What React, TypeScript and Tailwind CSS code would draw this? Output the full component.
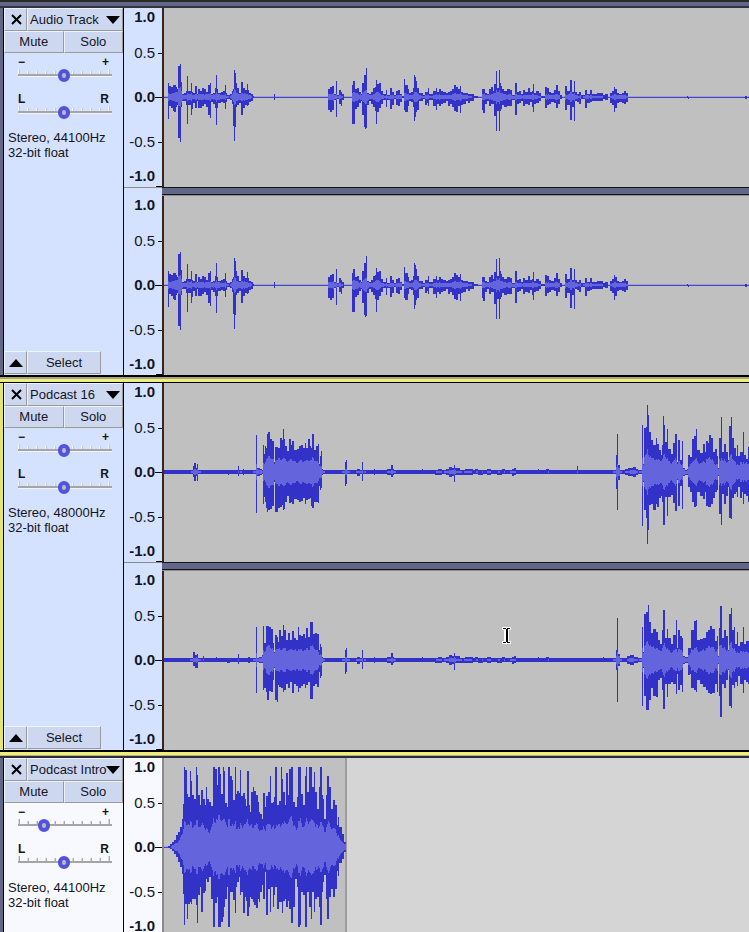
import { useState } from 'react';

// [x, peak above the zero line, peak below it], each held until the next entry
type Sample = [number, number, number];

type Channel = {
  samples: Sample[];
  rms: number;
};

type Track = {
  id: string;
  name: string;
  format: string;
  gain: number;
  pan: number;
  focused?: boolean;
  muted?: boolean;
  clipEnd?: number;
  channels: Channel[];
};

const START = 164;
const MIDDLE = 89;

const speech: Sample[] = [
  [164, 0, 0], [168, 14, 22], [169, 11, 9], [171, 10, 11], [173, 12, 14], [174, 12, 15], [176, 10, 10], [177, 8, 8],
  [178, 31, 41], [180, 33, 45], [181, 15, 10], [182, 3, 4], [184, 4, 4], [186, 6, 8], [187, 21, 27], [188, 6, 8],
  [191, 14, 18], [192, 5, 12], [193, 4, 6], [195, 11, 11], [197, 3, 4], [198, 8, 11], [200, 6, 11], [202, 9, 9],
  [204, 8, 7], [206, 5, 10], [208, 12, 18], [210, 14, 21], [211, 3, 5], [213, 4, 7], [215, 9, 11], [216, 22, 28],
  [217, 8, 11], [218, 4, 6], [221, 5, 5], [223, 6, 6], [225, 12, 12], [226, 4, 5], [227, 2, 2], [230, 3, 3],
  [232, 6, 7], [233, 8, 29], [234, 27, 44], [235, 24, 30], [236, 14, 10], [237, 9, 8], [239, 4, 6], [241, 15, 18],
  [243, 9, 11], [245, 7, 8], [247, 13, 9], [248, 7, 8], [249, 4, 5], [251, 3, 4], [253, 1, 1], [254, 0, 0],
  [274, 3, 3], [275, 0, 0], [328, 8, 13], [330, 10, 15], [332, 11, 13], [334, 3, 3], [336, 16, 20], [337, 2, 2],
  [339, 7, 7], [341, 5, 9], [342, 3, 3], [344, 0, 0], [352, 12, 27], [353, 16, 27], [355, 8, 12], [357, 9, 10],
  [359, 5, 6], [361, 3, 4], [362, 14, 18], [364, 22, 30], [365, 22, 32], [366, 29, 31], [367, 4, 8], [369, 3, 4],
  [371, 5, 7], [373, 9, 10], [375, 10, 14], [376, 17, 27], [377, 13, 15], [379, 14, 11], [381, 6, 7], [383, 3, 3],
  [386, 7, 10], [387, 2, 3], [390, 9, 12], [392, 5, 8], [394, 2, 2], [396, 6, 8], [398, 7, 9], [400, 3, 5],
  [402, 1, 1], [404, 18, 13], [405, 12, 15], [408, 8, 9], [409, 4, 4], [411, 5, 5], [413, 9, 10], [414, 22, 24],
  [415, 20, 20], [416, 16, 15], [417, 9, 13], [419, 4, 4], [423, 2, 2], [425, 5, 8], [427, 5, 6], [428, 9, 9],
  [429, 3, 3], [433, 6, 9], [436, 9, 13], [437, 5, 7], [439, 8, 9], [441, 6, 7], [443, 5, 6], [446, 4, 4],
  [448, 5, 9], [450, 6, 7], [452, 8, 10], [454, 12, 14], [456, 10, 15], [458, 8, 9], [460, 11, 16], [461, 5, 8],
  [463, 4, 7], [466, 4, 4], [468, 3, 6], [470, 3, 4], [474, 1, 1], [478, 0, 0], [482, 8, 13], [483, 8, 16],
  [485, 4, 7], [487, 3, 4], [489, 8, 9], [491, 10, 7], [493, 6, 7], [494, 13, 19], [496, 26, 34], [497, 9, 14],
  [499, 27, 34], [500, 14, 14], [501, 11, 12], [502, 8, 8], [504, 6, 10], [507, 8, 9], [510, 7, 9], [512, 2, 3],
  [515, 14, 18], [517, 5, 7], [519, 6, 6], [521, 3, 4], [523, 7, 9], [525, 5, 7], [528, 9, 8], [530, 5, 5],
  [532, 6, 10], [533, 13, 15], [534, 4, 7], [536, 6, 6], [539, 4, 4], [541, 1, 1], [545, 10, 11], [547, 9, 8],
  [549, 5, 7], [551, 4, 5], [554, 7, 6], [556, 12, 11], [558, 6, 7], [560, 2, 2], [562, 0, 0], [565, 11, 13],
  [567, 6, 8], [570, 17, 23], [572, 5, 10], [574, 16, 24], [575, 5, 4], [577, 3, 5], [579, 5, 7], [581, 2, 2],
  [585, 7, 11], [587, 3, 6], [590, 7, 5], [592, 3, 4], [597, 4, 4], [603, 2, 2], [605, 3, 3], [608, 0, 0],
  [610, 4, 6], [612, 6, 8], [614, 10, 15], [615, 8, 11], [617, 4, 6], [619, 3, 5], [622, 4, 6], [624, 6, 7],
  [626, 4, 5], [628, 0, 0], [687, 1, 1], [688, 0, 2], [689, 0, 0], [745, 1, 2], [747, 0, 0],
];

// the pauses between the spoken parts, the same on both channels
const pauses: Sample[] = [
  [345, 10, 14], [346, 12, 12], [347, 2, 2], [357, 3, 4], [360, 2, 2], [362, 10, 9], [363, 2, 2], [374, 3, 3],
  [375, 2, 2], [387, 3, 3], [391, 7, 5], [393, 3, 3], [394, 2, 2], [422, 3, 2], [423, 2, 2], [435, 2, 3],
  [438, 3, 3], [442, 2, 2], [446, 3, 3], [449, 5, 5], [452, 4, 4], [454, 7, 10], [455, 4, 3], [460, 2, 3],
  [465, 3, 3], [473, 2, 2], [475, 3, 2], [478, 2, 3], [483, 2, 2], [487, 3, 3], [491, 2, 2], [497, 2, 3],
  [502, 3, 2], [505, 2, 2], [512, 3, 4], [514, 4, 3], [516, 2, 2], [538, 3, 2], [539, 2, 2], [546, 3, 2],
  [549, 2, 2],
];

const podcastLeft: Sample[] = [
  [164, 2, 2], [193, 6, 5], [194, 9, 9], [196, 4, 4], [197, 8, 9], [198, 2, 2], [228, 2, 3], [229, 2, 2],
  [238, 6, 4], [239, 2, 2], [243, 3, 3], [244, 2, 2], [256, 37, 41], [257, 4, 4], [260, 3, 3], [262, 2, 2],
  [263, 27, 32], [264, 18, 25], [265, 26, 30], [266, 24, 36], [267, 38, 40], [268, 40, 38], [270, 33, 37],
  [272, 31, 34], [274, 10, 10], [275, 25, 40], [278, 24, 36], [280, 34, 35], [282, 32, 33], [283, 43, 38],
  [284, 33, 37], [285, 26, 30], [287, 21, 24], [289, 33, 31], [291, 27, 30], [292, 31, 32], [294, 22, 27],
  [297, 23, 28], [299, 26, 30], [301, 27, 29], [303, 24, 26], [305, 29, 32], [306, 24, 28], [308, 33, 27],
  [310, 26, 26], [311, 24, 34], [312, 38, 36], [314, 22, 30], [316, 26, 30], [318, 28, 31], [319, 8, 14],
  [320, 16, 18], [321, 21, 16], [322, 3, 3], [323, 2, 2],
  ...pauses,
  [577, 6, 2], [578, 2, 2], [616, 17, 17], [617, 38, 38], [618, 7, 8], [620, 2, 2], [625, 3, 3], [628, 4, 4],
  [633, 5, 5], [636, 3, 3], [638, 2, 2], [642, 47, 54], [643, 8, 10], [644, 44, 38], [646, 45, 46], [647, 67, 72],
  [648, 57, 58], [649, 40, 33], [651, 32, 32], [653, 27, 38], [656, 34, 32], [657, 28, 35], [659, 22, 26],
  [661, 17, 24], [662, 27, 30], [663, 56, 53], [664, 47, 53], [665, 30, 25], [667, 43, 44], [668, 23, 25],
  [671, 18, 23], [673, 29, 31], [675, 38, 39], [677, 10, 8], [678, 32, 34], [680, 12, 14], [682, 31, 37],
  [683, 4, 4], [685, 2, 3], [687, 3, 3], [688, 17, 15], [690, 15, 20], [692, 33, 30], [694, 36, 35], [696, 43, 34],
  [697, 22, 20], [700, 19, 24], [703, 28, 27], [705, 20, 20], [706, 31, 34], [708, 29, 35], [709, 37, 35],
  [711, 34, 32], [713, 20, 26], [715, 23, 20], [717, 16, 18], [718, 4, 4], [719, 34, 42], [721, 55, 53],
  [722, 20, 22], [724, 28, 32], [726, 20, 24], [728, 12, 15], [729, 46, 46], [731, 55, 47], [732, 34, 26],
  [734, 24, 22], [736, 16, 20], [737, 27, 25], [738, 16, 15], [740, 20, 26], [742, 20, 20], [743, 40, 32],
  [744, 17, 22], [746, 13, 24], [748, 25, 30], [750, 2, 2],
];

const podcastRight: Sample[] = [
  [164, 2, 2], [193, 8, 6], [195, 5, 8], [197, 6, 8], [198, 2, 2], [203, 4, 2], [204, 2, 2], [216, 3, 2],
  [217, 2, 2], [227, 2, 3], [230, 2, 2], [238, 6, 4], [239, 2, 2], [248, 3, 3], [250, 2, 2], [256, 33, 33],
  [257, 2, 2], [259, 3, 3], [262, 5, 3], [263, 34, 30], [264, 17, 28], [266, 34, 32], [267, 34, 40], [269, 33, 31],
  [271, 31, 32], [273, 17, 20], [274, 8, 8], [275, 25, 40], [277, 23, 42], [278, 18, 25], [279, 30, 27],
  [281, 24, 28], [283, 35, 32], [284, 30, 30], [286, 20, 24], [288, 27, 28], [290, 20, 22], [292, 29, 33],
  [294, 22, 24], [296, 20, 26], [298, 33, 32], [299, 25, 28], [301, 24, 26], [303, 26, 24], [305, 22, 28],
  [306, 32, 25], [308, 23, 22], [310, 38, 39], [313, 26, 26], [315, 27, 24], [317, 26, 27], [319, 10, 12],
  [320, 16, 18], [321, 13, 16], [322, 3, 3], [323, 2, 2],
  ...pauses,
  [603, 3, 2], [604, 2, 2], [616, 10, 10], [617, 42, 42], [618, 6, 6], [620, 2, 2], [627, 4, 4], [630, 5, 5],
  [634, 3, 3], [638, 2, 2], [642, 33, 46], [643, 8, 8], [644, 46, 36], [646, 48, 50], [648, 55, 50], [649, 38, 40],
  [651, 27, 28], [653, 31, 36], [656, 28, 37], [658, 20, 20], [660, 16, 18], [662, 30, 30], [663, 50, 49],
  [665, 22, 24], [667, 31, 37], [668, 22, 24], [671, 16, 22], [673, 25, 24], [676, 40, 34], [677, 12, 14],
  [678, 30, 30], [680, 24, 25], [682, 22, 32], [683, 4, 4], [685, 3, 3], [688, 12, 15], [690, 12, 14], [691, 30, 28],
  [694, 39, 30], [696, 40, 32], [697, 20, 20], [700, 21, 24], [703, 22, 27], [706, 28, 30], [708, 30, 33],
  [710, 34, 34], [712, 31, 33], [715, 19, 24], [717, 24, 32], [718, 4, 4], [719, 32, 36], [720, 54, 57],
  [722, 22, 24], [724, 30, 28], [726, 24, 20], [728, 10, 10], [729, 46, 46], [731, 52, 48], [732, 30, 25],
  [734, 33, 28], [735, 16, 22], [737, 28, 26], [738, 14, 16], [740, 18, 24], [743, 33, 33], [744, 16, 20],
  [746, 19, 22], [748, 19, 24], [750, 2, 2],
];

const intro: Sample[] = [
  [164, 0, 0], [168, 1, 1], [170, 3, 2], [172, 5, 4], [174, 7, 7], [176, 12, 10], [178, 15, 15], [180, 20, 20],
  [182, 28, 27], [183, 43, 47], [184, 80, 78], [185, 77, 57], [187, 53, 72], [188, 50, 57], [190, 76, 55],
  [191, 66, 57], [192, 52, 52], [194, 48, 52], [196, 80, 58], [197, 72, 76], [198, 52, 48], [200, 42, 40],
  [201, 57, 65], [203, 48, 46], [205, 42, 44], [206, 60, 32], [207, 48, 35], [209, 45, 30], [211, 41, 52],
  [213, 80, 80], [215, 78, 56], [217, 62, 50], [218, 80, 80], [220, 73, 80], [221, 53, 75], [223, 80, 70],
  [224, 76, 60], [225, 44, 52], [227, 40, 40], [228, 80, 80], [230, 71, 45], [232, 67, 45], [233, 47, 53],
  [235, 80, 66], [236, 53, 40], [237, 56, 35], [239, 54, 30], [240, 77, 48], [241, 51, 45], [243, 54, 66],
  [245, 48, 50], [246, 41, 54], [247, 76, 69], [249, 42, 60], [250, 35, 50], [251, 55, 52], [253, 60, 55],
  [254, 56, 58], [256, 52, 61], [258, 45, 52], [259, 35, 55], [260, 33, 45], [262, 28, 38], [263, 54, 52],
  [265, 40, 25], [266, 51, 68], [268, 55, 42], [270, 71, 65], [271, 44, 40], [273, 45, 60], [274, 50, 48],
  [275, 80, 40], [277, 42, 62], [279, 46, 55], [281, 80, 55], [282, 68, 66], [283, 55, 54], [285, 42, 52],
  [286, 74, 60], [288, 52, 54], [289, 78, 62], [291, 80, 76], [293, 45, 60], [295, 40, 32], [297, 50, 40],
  [298, 80, 80], [300, 80, 78], [301, 53, 45], [303, 42, 48], [305, 71, 80], [306, 80, 80], [307, 55, 45],
  [309, 80, 60], [311, 80, 72], [312, 60, 45], [314, 75, 65], [315, 55, 52], [317, 38, 50], [319, 60, 60],
  [320, 80, 78], [322, 52, 45], [323, 48, 35], [324, 28, 28], [326, 52, 52], [327, 71, 72], [329, 60, 50],
  [331, 38, 42], [333, 47, 50], [335, 42, 42], [337, 22, 24], [338, 30, 29], [339, 20, 16], [342, 13, 12],
  [344, 5, 5], [346, 0, 0],
];

const initialTracks: Track[] = [
  {
    id: 'audio',
    name: 'Audio Track',
    format: 'Stereo, 44100Hz',
    gain: 50,
    pan: 50,
    channels: [{ samples: speech, rms: 0.32 }, { samples: speech, rms: 0.32 }],
  },
  {
    id: 'podcast',
    name: 'Podcast 16',
    format: 'Stereo, 48000Hz',
    gain: 50,
    pan: 50,
    focused: true,
    channels: [{ samples: podcastLeft, rms: 0.4 }, { samples: podcastRight, rms: 0.4 }],
  },
  {
    id: 'intro',
    name: 'Podcast Intro',
    format: 'Stereo, 44100Hz',
    gain: 28,
    pan: 50,
    muted: true,
    clipEnd: 346,
    channels: [{ samples: intro, rms: 0.4 }, { samples: intro, rms: 0.4 }],
  },
];

// one entry per pixel column
function toColumns(samples: Sample[]) {
  const columns: [number, number][] = [];
  samples.forEach(([x, up, down], i) => {
    const next = samples[i + 1] ? samples[i + 1][0] : x + 1;
    for (let c = x; c < next; c++) columns.push([up, down]);
  });
  return columns;
}

function toRms(columns: [number, number][], ratio: number) {
  return columns.map(([up, down], i): [number, number] => {
    const near = columns.slice(Math.max(0, i - 3), i + 4);
    const mean = near.reduce((sum, [u, d]) => sum + (u + d) / 2, 0) / near.length;
    const ripple = 0.88 + 0.24 * ((((i >> 1) * 37) % 11) / 10);
    const level = (mean * 0.65 + ((up + down) / 2) * 0.35) * ratio * ripple;
    // too quiet to show inside the peaks
    if (level < 1) return [0, 0];
    return [Math.min(up - 1, level), Math.min(down - 1, level)];
  });
}

function toPath(columns: [number, number][]) {
  return columns
    .map(([up, down], x) => {
      const top = Math.round(up);
      const bottom = Math.round(down);
      return top + bottom < 2 ? '' : `M${x} ${MIDDLE - top}h1v${top + bottom}h-1z`;
    })
    .join('');
}

function Waveform({ channel, clipEnd, label }: { channel: Channel; clipEnd?: number; label: string }) {
  const columns = toColumns(channel.samples);
  const end = clipEnd ? clipEnd - START : undefined;
  return (
    <svg role="img" aria-label={label} className="block h-[179px] w-full" shapeRendering="crispEdges">
      {end && <rect x={end} y="0" width="100%" height="179" fill="#d5d5d5" />}
      {end && <rect x={end - 1} y="0" width="2" height="179" fill="#9c9c9c" />}
      <rect x="0" y={MIDDLE - 1} width={end || '100%'} height="2" fill="#a0a0cc" />
      <rect x="0" y={MIDDLE} width={end || '100%'} height="1" fill="#4646cd" />
      <path d={toPath(columns)} fill="#3232c8" />
      <path d={toPath(toRms(columns, channel.rms))} fill="#6464dc" />
    </svg>
  );
}

function Ruler() {
  return (
    <div className="flex h-[179px] flex-col text-[15px] leading-[18px]">
      <div className="flex justify-end font-bold">1.0<span className="w-[7px]" /></div>
      <div className="mt-[18px] flex items-center justify-end">0.5<span className="ml-[3px] h-px w-1 bg-black" /></div>
      <div className="mt-[26px] flex items-center justify-end font-bold">0.0<span className="h-px w-[7px] bg-black" /></div>
      <div className="mt-[27px] flex items-center justify-end">-0.5<span className="ml-[3px] h-px w-1 bg-black" /></div>
      <div className="mt-[16px] flex justify-end font-bold">-1.0<span className="w-[7px]" /></div>
      <span className="mt-px h-px w-[6px] self-end bg-black" />
    </div>
  );
}

const bevel = 'border border-t-[#eef2fb] border-l-[#eef2fb] border-r-[#9a9a9a] border-b-[#9a9a9a] bg-[#cdd8f0]';

function Slider({ left, right, label, value, muted, onChange }: {
  left: string;
  right: string;
  label: string;
  value: number;
  muted?: boolean;
  onChange: (value: number) => void;
}) {
  return (
    <label className="block px-[9px]">
      <span className="flex justify-between px-[5px] text-xs leading-[13px] font-bold">
        <span>{left}</span>
        <span>{right}</span>
      </span>
      <span className="relative block h-3">
        <svg className="absolute inset-0 h-3 w-full" shapeRendering="crispEdges">
          {[0, 1, 2, 3, 4, 5, 6, 7, 8, 9, 10].map((i) => (
            <g key={i}>
              <rect x={5 + i * 9} y={i % 10 ? 2 : 0} width="2" height={i % 10 ? 4 : 6} fill={muted ? '#d8d8dc' : '#f4f4f4'} />
              <rect x={6 + i * 9} y={i % 10 ? 2 : 0} width="1" height={i % 10 ? 4 : 6} fill={muted ? '#a9a9a9' : '#c8c8c8'} />
            </g>
          ))}
          <rect x="5" y="5" width="94" height="2" fill="#a5a5a5" />
          {!muted && <rect x="5" y="7" width="94" height="1" fill="#f4f4f4" />}
        </svg>
        <input
          type="range"
          aria-label={label}
          min={0}
          max={100}
          value={value}
          onChange={(e) => onChange(Number(e.target.value))}
          className="absolute inset-y-0 left-0 h-3 w-[102px] appearance-none bg-transparent [&::-webkit-slider-thumb]:h-[13px] [&::-webkit-slider-thumb]:w-3 [&::-webkit-slider-thumb]:appearance-none [&::-webkit-slider-thumb]:rounded-full [&::-webkit-slider-thumb]:border-4 [&::-webkit-slider-thumb]:border-[#5252dc] [&::-webkit-slider-thumb]:bg-[#b9b9c4]"
        />
      </span>
    </label>
  );
}

function ControlPanel({ track, onChange, onClose }: { track: Track; onChange: (patch: Partial<Track>) => void; onClose: () => void }) {
  return (
    <div className={`flex w-[120px] shrink-0 flex-col border-r border-black pb-px text-[13px] ${track.muted ? 'bg-[#f8f9ff]' : 'bg-[#d5e2ff]'}`}>
      <div className="flex h-[23px]">
        <button aria-label="Close track" onClick={onClose} className={`flex w-[23px] items-center justify-center pl-[2px] ${bevel}`}>
          <svg width="11" height="11" viewBox="0 0 11 11" stroke="#000" strokeWidth="2">
            <path d="M1 1l9 9M10 1l-9 9" />
          </svg>
        </button>
        <button aria-label={track.name} className={`relative flex flex-1 items-center overflow-hidden pl-[2px] whitespace-nowrap ${bevel}`}>
          {track.name}
          <svg width="14" height="8" viewBox="0 0 14 8" className="absolute right-[2px]">
            <path d="M0 0h14l-7 8z" />
          </svg>
        </button>
      </div>
      <div className="grid h-[22px] grid-cols-2">
        <button className={bevel}>Mute</button>
        <button className={bevel}>Solo</button>
      </div>

      <div className="mt-[3px] flex flex-col gap-3">
        <Slider left="−" right="+" label="Gain" value={track.gain} muted={track.muted} onChange={(gain) => onChange({ gain })} />
        <Slider left="L" right="R" label="Pan" value={track.pan} muted={track.muted} onChange={(pan) => onChange({ pan })} />
      </div>

      <p className="mt-3 pl-1 leading-[15px]">
        {track.format}
        <br />
        32-bit float
      </p>

      <div className="mt-auto flex h-[23px]">
        <button aria-label="Collapse track" className={`flex w-[23px] items-center justify-center ${bevel}`}>
          <svg width="14" height="8" viewBox="0 0 14 8">
            <path d="M0 8h14l-7-8z" />
          </svg>
        </button>
        <button className={`w-[74px] ${bevel}`}>Select</button>
      </div>
    </div>
  );
}

function IBeam() {
  return (
    <svg width="11" height="19" viewBox="0 0 11 19" shapeRendering="crispEdges" className="absolute top-[55px] left-[337px]">
      <path d="M1 1h9v3H8v11h2v3H1v-3h2V4H1z" fill="#fff" />
      <path d="M2 2h3v1h1V2h3v1H7v13h2v1H6v-1H5v1H2v-1h3V3H2z" fill="#000" />
    </svg>
  );
}

function TrackRow({ track, onChange, onClose }: { track: Track; onChange: (patch: Partial<Track>) => void; onClose: () => void }) {
  return (
    <section aria-label={track.name} className={`border-l-[3px] ${track.focused ? 'border-[#e6e66e]' : 'border-[#636787]'}`}>
      <div className="flex border-l border-black">
        <ControlPanel track={track} onChange={onChange} onClose={onClose} />
        <div className={`flex w-[38px] shrink-0 flex-col ${track.muted ? 'bg-[#f8f9ff]' : 'bg-[#d5e2ff]'}`}>
          <Ruler />
          <div className="h-[9px] border-t border-[#8c8c8c]" />
          <Ruler />
        </div>
        <div className="min-w-0 flex-1">
          {track.channels.map((channel, i) => (
            <div key={i}>
              {i > 0 && (
                <div className="border-b border-[#8c8c8c]">
                  <div className="h-2 border-y border-[#14141e] bg-[#636787]" />
                </div>
              )}
              <div className={`relative border-l-2 bg-[#c0c0c0] ${track.muted ? 'border-[#8a8a8a]' : 'border-[#3a2420]'}`}>
                <Waveform channel={channel} clipEnd={track.clipEnd} label={`${track.name} channel ${i + 1}`} />
                {track.focused && i === 1 && <IBeam />}
              </div>
            </div>
          ))}
        </div>
      </div>
    </section>
  );
}

export default function App() {
  const [tracks, setTracks] = useState(initialTracks);

  function update(id: string, patch: Partial<Track>) {
    setTracks((prev) => prev.map((t) => (t.id === id ? { ...t, ...patch } : t)));
  }

  return (
    <main className="h-screen overflow-hidden bg-[#636787] font-['Liberation_Sans',Arial,sans-serif] text-[#14141e]">
      <div className="h-2 border-t-2 border-b-2 border-t-[#2b2b2b] border-b-[#33333f] bg-[#636787]" />
      {tracks.map((track) => (
        <div key={track.id}>
          {track.focused && (
            <div>
              <div className="h-[2px] bg-black" />
              <div className="h-[2px] bg-[#a5a58c]" />
              <div className="h-[3px] bg-[#eeee78]" />
              <div className="h-px bg-black" />
            </div>
          )}
          <TrackRow track={track} onChange={(patch) => update(track.id, patch)} onClose={() => setTracks((prev) => prev.filter((t) => t.id !== track.id))} />
          {track.focused && (
            <div>
              <div className="h-[2px] bg-black" />
              <div className="h-[3px] bg-[#eeee78]" />
              <div className="h-px bg-[#b4b482]" />
              <div className="h-[2px] bg-[#2c2c3c]" />
            </div>
          )}
        </div>
      ))}
    </main>
  );
}
